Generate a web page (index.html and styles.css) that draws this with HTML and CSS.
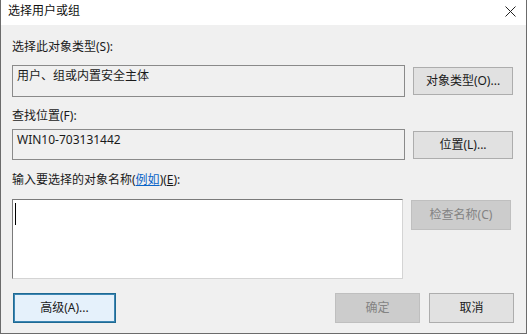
FILE: index.html
```html
<!DOCTYPE html>
<html lang="zh-CN">
<head>
<meta charset="utf-8">
<title>选择用户或组</title>
<link rel="stylesheet" href="styles.css">
</head>
<body>
<div class="window">
  <div class="titlebar">
    <span class="title">选择用户或组</span>
    <span class="close">
      <svg width="11" height="11" viewBox="0 0 11 11"><path d="M0.5 0.5 L10.5 10.5 M10.5 0.5 L0.5 10.5" stroke="#222" stroke-width="1" fill="none"/></svg>
    </span>
  </div>
  <div class="content">
    <div class="label first">选择此对象类型(S):</div>
    <div class="row">
      <div class="field">用户、组或内置安全主体</div>
      <button class="btn">对象类型(O)...</button>
    </div>
    <div class="label second">查找位置(F):</div>
    <div class="row row2">
      <div class="field">WIN10-703131442</div>
      <button class="btn">位置(L)...</button>
    </div>
    <div class="label third">输入要选择的对象名称(<a class="link">例如</a>)(<u>E</u>):</div>
    <div class="row row3">
      <div class="textarea"><span class="caret"></span></div>
      <button class="btn disabled">检查名称(C)</button>
    </div>
    <div class="footer">
      <button class="btn default">高级(A)...</button>
      <div class="spacer"></div>
      <button class="btn small disabled">确定</button>
      <button class="btn small">取消</button>
    </div>
  </div>
</div>
</body>
</html>
```

FILE: styles.css
```css
* { box-sizing: border-box; }
html, body {
  margin: 0;
  padding: 0;
  background: #ffffff;
}
body {
  font-family: "Segoe UI", "Noto Sans", "Noto Sans CJK SC", sans-serif;
  font-size: 12px;
  color: #1a1a1a;
}
.window {
  width: 527px;
  height: 334px;
  border: 1px solid #6b6b6b;
  border-top: none;
  background: #f0f0f0;
  display: flex;
  flex-direction: column;
}
.titlebar {
  height: 25px;
  background: #ffffff;
  display: flex;
  align-items: center;
  justify-content: space-between;
  padding: 0 10px 3px 7px;
  flex: none;
}
.title {
  font-size: 12px;
  line-height: 16px;
  color: #111;
}
.close {
  display: flex;
  width: 11px;
  height: 11px;
}
.content {
  padding: 0 12px 0 11px;
  display: flex;
  flex-direction: column;
}
.label {
  line-height: 16px;
  height: 16px;
  color: #1a1a1a;
}
.label.first { margin-top: 14px; }
.label.second { margin-top: 11px; }
.label.third { margin-top: 12px; }
.link {
  color: #0a64c8;
  text-decoration: underline;
}
.row {
  display: flex;
  align-items: flex-start;
  gap: 8px;
  margin-top: 10px;
}
.row2 { margin-top: 5px; }
.row3 { margin-top: 11px; }
.field {
  width: 393px;
  height: 32px;
  border: 1px solid #8a8a8a;
  background: #f0f0f0;
  padding: 2px 4px;
  line-height: 16px;
  color: #1a1a1a;
}
.row2 .field { height: 31px; }
.btn {
  font: inherit;
  font-size: 12px;
  line-height: 16px;
  width: 100px;
  height: 28px;
  margin-top: 2px;
  background: #e1e1e1;
  border: 1px solid #adadad;
  color: #1a1a1a;
  padding: 0;
  text-align: center;
}
.row3 .btn { margin-top: 1px; height: 30px; }
.btn.disabled {
  background: #cccccc;
  border-color: #bfbfbf;
  color: #838383;
}
.textarea {
  width: 391px;
  height: 80px;
  background: #ffffff;
  border-top: 1px solid #7a7a7a;
  border-left: 1px solid #7a7a7a;
  border-right: 1px solid #d4d4d4;
  border-bottom: 1px solid #d4d4d4;
  padding: 3px 2px;
}
.caret {
  display: block;
  width: 1px;
  height: 22px;
  background: #000;
}
.footer {
  display: flex;
  align-items: center;
  gap: 9px;
  margin-top: 14px;
}
.footer .btn { margin-top: 0; height: 30px; }
.btn.default {
  width: 103px;
  margin-left: 1px;
  background: #e5f1fb;
  border: 1px solid #1f6a93;
  box-shadow: inset 0 0 0 1px #3c86b3;
}
.spacer { flex: 1; }
.btn.small { width: 85px; }
```
